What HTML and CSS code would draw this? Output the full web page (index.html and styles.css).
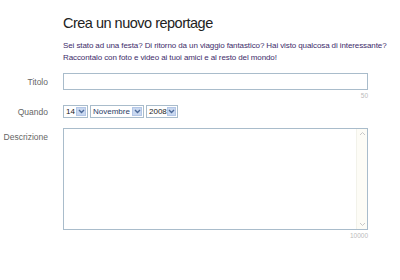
FILE: index.html
```html
<!DOCTYPE html>
<html lang="it">
<head>
  <meta charset="UTF-8">
  <title>Crea un nuovo reportage</title>
  <link rel="stylesheet" href="styles.css">
</head>
<body>
  <div class="page">
    <h1>Crea un nuovo reportage</h1>
    <p class="intro">Sei stato ad una festa? Di ritorno da un viaggio fantastico? Hai visto qualcosa di interessante?<br>Raccontalo con foto e video ai tuoi amici e al resto del mondo!</p>

    <div class="row row-title">
      <label class="label">Titolo</label>
      <div class="field">
        <div class="input"></div>
        <div class="counter">50</div>
      </div>
    </div>

    <div class="row row-when">
      <label class="label">Quando</label>
      <div class="field selects">
        <span class="select"><span class="value">14</span><span class="arrow"><svg width="7" height="5" viewBox="0 0 7 5"><path d="M1 1 L3.5 3.5 L6 1" fill="none" stroke="#4d6a99" stroke-width="1.4"/></svg></span></span>
        <span class="select"><span class="value">Novembre</span><span class="arrow"><svg width="7" height="5" viewBox="0 0 7 5"><path d="M1 1 L3.5 3.5 L6 1" fill="none" stroke="#4d6a99" stroke-width="1.4"/></svg></span></span>
        <span class="select"><span class="value">2008</span><span class="arrow"><svg width="7" height="5" viewBox="0 0 7 5"><path d="M1 1 L3.5 3.5 L6 1" fill="none" stroke="#4d6a99" stroke-width="1.4"/></svg></span></span>
      </div>
    </div>

    <div class="row row-desc">
      <label class="label">Descrizione</label>
      <div class="field">
        <div class="textarea">
          <div class="text"></div>
          <div class="scrollbar">
            <svg width="7" height="5" viewBox="0 0 7 5"><path d="M1 4 L3.5 1.5 L6 4" fill="none" stroke="#c8c8c8" stroke-width="1"/></svg>
            <svg width="7" height="5" viewBox="0 0 7 5"><path d="M1 1 L3.5 3.5 L6 1" fill="none" stroke="#c8c8c8" stroke-width="1"/></svg>
          </div>
        </div>
        <div class="counter">10000</div>
      </div>
    </div>
  </div>
</body>
</html>
```

FILE: styles.css
```css
body {
  margin: 0;
  background: #fff;
  font-family: "Liberation Sans", Arial, sans-serif;
}

.page {
  padding: 14px 0 0 0;
}

h1 {
  margin: 0 0 0 63px;
  font-size: 14.5px;
  letter-spacing: -0.5px;
  font-weight: normal;
  color: #222;
  line-height: 18px;
}

.intro {
  margin: 8px 0 0 63px;
  width: 337px;
  font-size: 8px;
  letter-spacing: -0.1px;
  line-height: 12px;
  color: #3e2c6a;
  white-space: nowrap;
}

.row {
  display: flex;
}

.row-title {
  margin-top: 9px;
}

.label {
  width: 48px;
  text-align: right;
  font-size: 8.5px;
  color: #666;
  padding-top: 4px;
  margin-right: 15px;
}

.field {
  width: 305px;
}

.input {
  height: 15px;
  border: 1px solid #a9bccb;
}

.counter {
  text-align: right;
  font-size: 6.5px;
  color: #bbb;
  line-height: 8px;
  margin-top: 2px;
}

.row-when {
  margin-top: 5px;
}

.row-when .label {
  padding-top: 2px;
}

.selects {
  display: flex;
  gap: 2px;
  height: 14px;
}

.select {
  display: flex;
  align-items: center;
  justify-content: space-between;
  border: 1px solid #a9bccb;
  height: 11px;
  font-size: 8px;
  color: #222;
  padding-left: 2px;
}

.select:nth-child(1) { width: 21px; }
.select:nth-child(2) { width: 50px; color: #2a3c66; }
.select:nth-child(3) { width: 28px; }

.arrow {
  display: flex;
  align-items: center;
  justify-content: center;
  width: 10px;
  height: 9px;
  margin-right: 1px;
  background: #c9d8f0;
  border: 1px solid #b3c6e6;
  box-sizing: border-box;
}

.row-desc {
  margin-top: 9px;
}

.textarea {
  display: flex;
  height: 100px;
  border: 1px solid #a9bccb;
}

.text {
  flex: 1;
}

.scrollbar {
  width: 10px;
  display: flex;
  flex-direction: column;
  justify-content: space-between;
  align-items: center;
  padding: 2px 0;
  background: #fdfcf6;
  border-left: 1px solid #f2f2ea;
}
```
